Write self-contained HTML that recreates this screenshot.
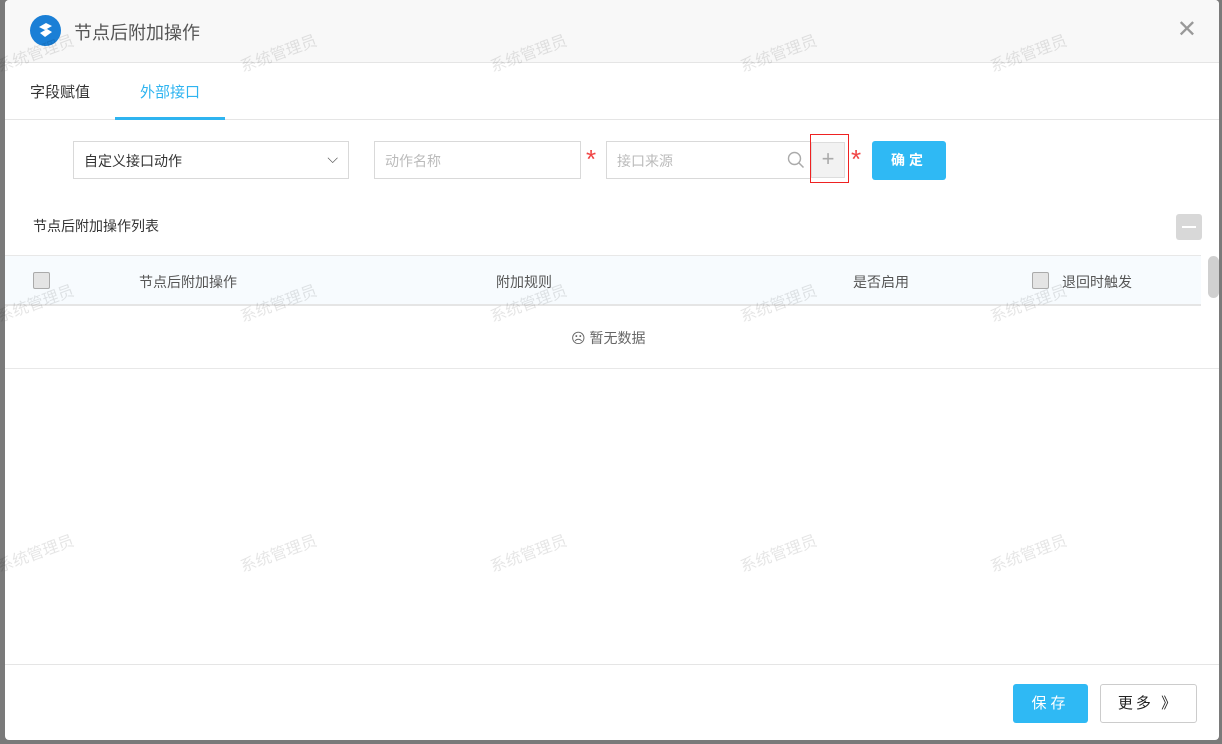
<!DOCTYPE html>
<html><head><meta charset="utf-8"><style>
*{box-sizing:border-box;margin:0;padding:0}
body{width:1222px;height:744px;background:#7a7a7a;font-family:"Liberation Sans","Noto Sans CJK SC",sans-serif;font-size:14px;color:#333;position:relative;overflow:hidden}
.dlg{position:absolute;left:5px;top:0;width:1214px;height:740px;background:#fff;border-radius:4px;overflow:hidden}
.hd{height:63px;background:#f8f8f8;border-bottom:1px solid #e5e5e5;position:relative}
.logo{position:absolute;left:25px;top:15px;width:31px;height:31px;border-radius:50%;background:#1a7fd6}
.title{position:absolute;left:69px;top:19px;font-size:18px;color:#555}
.close{position:absolute;right:22px;top:18px;font-size:24px;color:#999;line-height:24px;font-weight:300}
.tabs{height:57px;border-bottom:1px solid #e5e5e5;position:relative}
.tab{position:absolute;top:18px;font-size:15px}
.a{position:absolute;box-sizing:border-box}
.inp{border:1px solid #d9d9d9;height:38px;top:141px;color:#bbb;padding:9px 10px;font-size:14px}
.star{color:#f04444;font-size:26px;top:144px}
.wm{position:absolute;color:rgba(0,0,0,.1);font-size:16px;transform:rotate(-20deg);white-space:nowrap}
.cb{position:absolute;width:17px;height:17px;border:1px solid #aaa;border-radius:2px;background:#e4e4e4}
</style></head><body>
<div class="dlg">
<div class="hd"><div class="logo"><svg width="31" height="31" viewBox="0 0 31 31"><path d="M9 12 L16 8 L22 11 L15 15 Z M10 18 L17 14 L22 17 L15 22 Z" fill="#fff"/></svg></div><div class="title">节点后附加操作</div><div class="close">✕</div></div>
<div class="tabs"><div class="tab" style="left:25px;color:#333">字段赋值</div><div class="tab" style="left:135px;color:#2fb4f0">外部接口</div><div class="a" style="left:115px;top:117px;width:110px;height:3px;background:#2fb4f0;position:fixed"></div></div>
<div class="a inp" style="left:68px;width:276px;color:#333">自定义接口动作<span style="position:absolute;right:10px;top:8px;color:#555">⌵</span></div>
<div class="a inp" style="left:369px;width:207px">动作名称</div>
<div class="a star" style="left:581px">*</div>
<div class="a inp" style="left:601px;width:205px">接口来源<svg style="position:absolute;right:5px;top:9px" width="18" height="18" viewBox="0 0 18 18"><circle cx="7.5" cy="7.5" r="6" stroke="#aaa" stroke-width="1.4" fill="none"/><path d="M12 12L16.5 16.5" stroke="#aaa" stroke-width="1.5"/></svg></div>
<div class="a" style="left:806px;top:142px;width:34px;height:36px;background:#f2f2f2;border:1px solid #ddd;color:#aaa;font-size:22px;text-align:center;line-height:32px">+</div>
<div class="a" style="left:805px;top:134px;width:39px;height:49px;border:1px solid #e22"></div>
<div class="a star" style="left:846px">*</div>
<div class="a" style="left:867px;top:141px;width:74px;height:39px;background:#2fb9f4;border-radius:3px;color:#fff;font-weight:bold;text-align:center;line-height:39px;letter-spacing:4px">确定</div>
<div class="a" style="left:28px;top:216px">节点后附加操作列表</div>
<div class="a" style="left:1171px;top:214px;width:26px;height:26px;background:#d8d8d8;border-radius:3px"><div style="position:absolute;left:6px;top:12px;width:14px;height:2px;background:#fff"></div></div>
<div class="a" style="left:0;top:255px;width:1196px;height:51px;background:#f7fbfe;border-top:1px solid #e8e8e8;border-bottom:2px solid #e5e5e5;color:#555">
<div class="cb" style="left:28px;top:16px"></div>
<div class="a" style="left:134px;top:16px">节点后附加操作</div>
<div class="a" style="left:491px;top:16px">附加规则</div>
<div class="a" style="left:848px;top:16px">是否启用</div>
<div class="cb" style="left:1027px;top:16px"></div>
<div class="a" style="left:1057px;top:16px">退回时触发</div>
</div>
<div class="a" style="left:1203px;top:256px;width:11px;height:42px;background:#d0d0d0;border-radius:6px"></div>
<div class="a" style="left:566px;top:328px;color:#666">☹ 暂无数据</div>
<div class="a" style="left:0;top:368px;width:1214px;height:1px;background:#e8e8e8"></div>
<div class="a" style="left:0;top:664px;width:1214px;height:1px;background:#e5e5e5"></div>
<div class="a" style="left:1008px;top:684px;width:75px;height:39px;background:#2fb9f4;border-radius:3px;color:#fff;text-align:center;line-height:39px;font-size:15px;letter-spacing:4px">保存</div>
<div class="a" style="left:1095px;top:684px;width:97px;height:39px;border:1px solid #ccc;border-radius:3px;text-align:center;line-height:37px;font-size:15px;letter-spacing:3px;color:#222">更多 》</div>
</div>
<div class="wm" style="left:-5px;top:40px">系统管理员</div><div class="wm" style="left:238px;top:40px">系统管理员</div><div class="wm" style="left:488px;top:40px">系统管理员</div><div class="wm" style="left:738px;top:40px">系统管理员</div><div class="wm" style="left:988px;top:40px">系统管理员</div>
<div class="wm" style="left:-5px;top:290px">系统管理员</div><div class="wm" style="left:238px;top:290px">系统管理员</div><div class="wm" style="left:488px;top:290px">系统管理员</div><div class="wm" style="left:738px;top:290px">系统管理员</div><div class="wm" style="left:988px;top:290px">系统管理员</div>
<div class="wm" style="left:-5px;top:540px">系统管理员</div><div class="wm" style="left:238px;top:540px">系统管理员</div><div class="wm" style="left:488px;top:540px">系统管理员</div><div class="wm" style="left:738px;top:540px">系统管理员</div><div class="wm" style="left:988px;top:540px">系统管理员</div>
</body></html>
